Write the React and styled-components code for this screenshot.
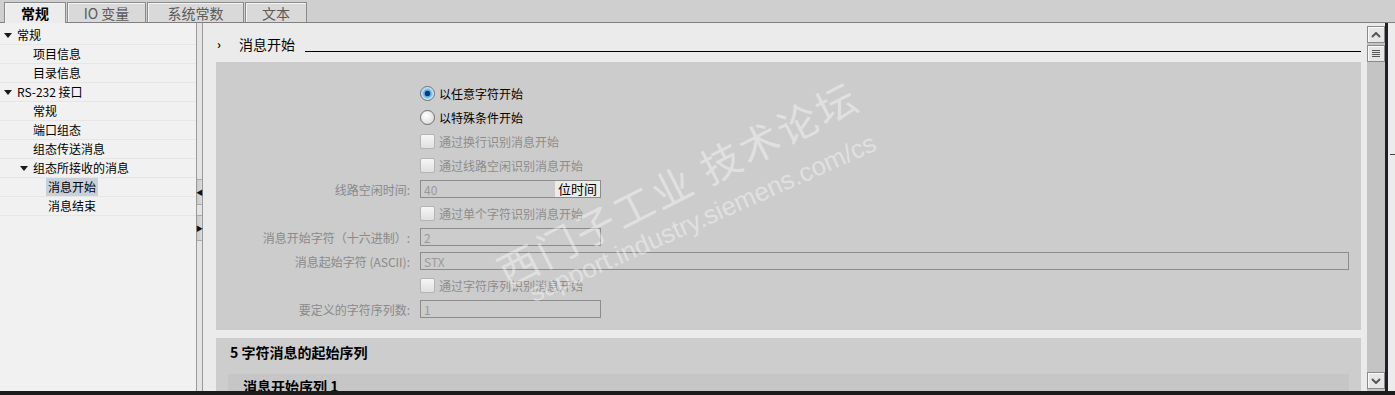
import React from 'react';
import styled, { createGlobalStyle } from 'styled-components';

const GlobalStyle = createGlobalStyle`
	html, body {
		margin: 0;
		padding: 0;
		background: #ebebeb;
		overflow: hidden;
	}
	body {
		font-family: "Noto Sans CJK SC", "Noto Sans", sans-serif;
		font-size: 12px;
	}
`;

// Layout
const Page = styled.div`
	display: flex;
	flex-direction: column;
	width: 1395px;
	height: 395px;
	overflow: hidden;
`;

const TabBar = styled.div`
	display: flex;
	align-items: flex-end;
	height: 23px;
	padding-left: 4px;
	background: #cfcfcf;
	border-bottom: 1px solid #808080;
	box-sizing: border-box;
`;

const Tab = styled.div`
	display: flex;
	align-items: center;
	justify-content: center;
	width: ${(p) => p.w}px;
	height: 21px;
	margin-right: 1px;
	margin-bottom: -1px;
	box-sizing: border-box;
	border: 1px solid #8a8a8a;
	border-bottom: ${(p) => (p.active ? 'none' : '1px solid #808080')};
	background: ${(p) => (p.active ? '#ececec' : '#d9d9d9')};
	font-size: 14px;
	font-weight: ${(p) => (p.active ? 700 : 400)};
	color: ${(p) => (p.active ? '#000' : '#5a5a5a')};
	box-shadow: inset 1px 1px 0 #f4f4f4;
`;

const Body = styled.div`
	display: flex;
	height: 368px;
`;

const Sidebar = styled.div`
	width: 196px;
	background: #f1f1f1;
	padding-top: 3px;
	box-sizing: border-box;
`;

const TreeRow = styled.div`
	display: flex;
	align-items: center;
	height: 19px;
	padding-left: ${(p) => p.indent}px;
	border-bottom: 1px solid #e6e6e6;
	box-sizing: border-box;
	font-size: 12px;
	color: #000;
	white-space: nowrap;
`;

const Caret = styled.span`
	display: inline-block;
	width: 0;
	height: 0;
	margin-right: 3px;
	border-left: 4px solid transparent;
	border-right: 4px solid transparent;
	border-top: 5px solid #1a1a1a;
`;

const TreeLabel = styled.span`
	padding: 0 2px;
	line-height: 18px;
	background: ${(p) => (p.selected ? '#c8d0da' : 'transparent')};
`;

const Splitter = styled.div`
	display: flex;
	flex-direction: column;
	width: 7px;
	box-sizing: border-box;
	border-left: 1px solid #9a9a9a;
	border-right: 1px solid #9a9a9a;
	background: #e4e4e4;
	padding-top: 156px;
	gap: 10px;
`;

const SplitButton = styled.div`
	display: flex;
	align-items: center;
	justify-content: center;
	height: 24px;
	background: linear-gradient(90deg, #c8c8c8, #dcdcdc);
	border-top: 1px solid #aaa;
	border-bottom: 1px solid #aaa;
	font-size: 7px;
	color: #111;
	line-height: 1;
`;

const Main = styled.div`
	position: relative;
	flex: 1;
	padding: 0 6px 0 13px;
	background: #ebebeb;
	overflow: hidden;
`;

const SectionHead = styled.div`
	display: flex;
	align-items: flex-end;
	height: 39px;
	padding-bottom: 9px;
	box-sizing: border-box;
`;

const Chevron = styled.span`
	width: 22px;
	font-size: 12px;
	font-weight: 700;
	line-height: 18px;
	padding-left: 1px;
`;

const HeadTitle = styled.span`
	font-size: 14px;
	line-height: 18px;
	color: #000;
	margin-right: 10px;
`;

const HeadLine = styled.div`
	flex: 1;
	height: 1px;
	margin-bottom: 1px;
	background: #000;
`;

const Panel = styled.div`
	background: #cccccc;
	padding: 19px 0 9px;
`;

const FormRow = styled.div`
	display: grid;
	grid-template-columns: 194px 1fr;
	column-gap: 10px;
	align-items: center;
	height: 24px;
`;

const FieldLabel = styled.div`
	text-align: right;
	color: #8a8a8a;
	font-size: 12px;
	white-space: nowrap;
`;

const Control = styled.div`
	display: flex;
	align-items: center;
	gap: 4px;
	color: ${(p) => (p.dim ? '#8c8c8c' : '#000')};
	font-size: 12px;
`;

const Radio = styled.span`
	width: 15px;
	height: 15px;
	border-radius: 50%;
	box-sizing: border-box;
	border: 1px solid #6e6e6e;
	background: ${(p) => (p.checked
		? 'radial-gradient(circle, #0b3a7a 0 2.5px, #4fa6de 3px, #cfe8f8 6px)'
		: 'radial-gradient(circle at 40% 35%, #ffffff, #d4d4d4)')};
`;

const CheckBox = styled.span`
	width: 15px;
	height: 15px;
	border-radius: 2px;
	box-sizing: border-box;
	border: 1px solid #b4b4b4;
	background: linear-gradient(180deg, #f6f6f6, #e0e0e0);
`;

const TextBox = styled.div`
	display: flex;
	align-items: center;
	justify-content: space-between;
	width: ${(p) => (p.wide ? 'auto' : '181px')};
	margin-right: ${(p) => (p.wide ? '12px' : '0')};
	height: 18px;
	box-sizing: border-box;
	border: 1px solid #8c8c8c;
	padding-left: 3px;
	color: #9a9a9a;
	font-size: 12px;
`;

const UnitButton = styled.span`
	height: 16px;
	line-height: 16px;
	padding: 0 3px;
	background: #ececec;
	color: #000;
	font-size: 13px;
`;

const Panel2 = styled.div`
	margin-top: 8px;
	background: #cdcdcd;
	height: 60px;
`;

const Panel2Title = styled.div`
	padding: 4px 0 0 14px;
	height: 36px;
	box-sizing: border-box;
	font-size: 14px;
	font-weight: 700;
	color: #000;
`;

const SubPanel = styled.div`
	margin: 0 12px;
	height: 30px;
	background: #c6c6c6;
	padding: 2px 0 0 15px;
	box-sizing: border-box;
	font-size: 14px;
	font-weight: 700;
`;

const Watermark = styled.div`
	position: absolute;
	left: ${(p) => p.x}px;
	top: ${(p) => p.y}px;
	transform: rotate(${(p) => p.r}deg);
	transform-origin: left bottom;
	color: rgba(255, 255, 255, 0.42);
	font-size: ${(p) => p.size}px;
	font-family: ${(p) => (p.latin ? '"Liberation Sans", sans-serif' : '"Noto Sans CJK SC", sans-serif')};
	white-space: nowrap;
	pointer-events: none;
	letter-spacing: ${(p) => (p.latin ? '0' : '3px')};
`;

const Scrollbar = styled.div`
	display: flex;
	flex-direction: column;
	width: 18px;
	padding-top: 3px;
	box-sizing: border-box;
	background: linear-gradient(180deg, #ebebeb 0 3px, #c4c4c4 3px);
`;

const ScrollButton = styled.div`
	display: flex;
	align-items: center;
	justify-content: center;
	height: 17px;
	margin-bottom: 2px;
	box-sizing: border-box;
	border: 1px solid #8a8a8a;
	background: #e6e6e6;
	box-shadow: inset 1px 1px 0 #fafafa;
	margin-top: ${(p) => (p.bottom ? 'auto' : '0')};
`;

const DarkEdge = styled.div`
	width: 3px;
	background: #1d1f2b;
`;

const RightStrip = styled.div`
	width: 7px;
	background: #ececec;
	padding-top: 131px;
	box-sizing: border-box;
`;

const StripTick = styled.div`
	width: 5px;
	height: 1px;
	margin-left: 2px;
	background: #444;
`;

const BottomBar = styled.div`
	height: 4px;
	background: #1c1c1c;
`;

const tree = [
	{ label: '常规', indent: 4, caret: true },
	{ label: '项目信息', indent: 31 },
	{ label: '目录信息', indent: 31 },
	{ label: 'RS-232 接口', indent: 4, caret: true },
	{ label: '常规', indent: 31 },
	{ label: '端口组态', indent: 31 },
	{ label: '组态传送消息', indent: 31 },
	{ label: '组态所接收的消息', indent: 20, caret: true },
	{ label: '消息开始', indent: 46, selected: true },
	{ label: '消息结束', indent: 46 },
];

const UpIcon = () => (
	<svg width="10" height="6" viewBox="0 0 10 6">
		<path d="M1 5 L5 1 L9 5" fill="none" stroke="#555" strokeWidth="2" />
	</svg>
);

const DownIcon = () => (
	<svg width="10" height="6" viewBox="0 0 10 6">
		<path d="M1 1 L5 5 L9 1" fill="none" stroke="#555" strokeWidth="2" />
	</svg>
);

const MenuIcon = () => (
	<svg width="8" height="8" viewBox="0 0 8 8">
		<path d="M0 0.5 H8 M0 2.5 H8 M0 4.5 H8 M0 6.5 H8" stroke="#555" strokeWidth="1" />
	</svg>
);

function App() {
	return (
		<Page>
			<GlobalStyle />
			<TabBar>
				<Tab w={62} active>常规</Tab>
				<Tab w={79}>IO 变量</Tab>
				<Tab w={97}>系统常数</Tab>
				<Tab w={62}>文本</Tab>
			</TabBar>
			<Body>
				<Sidebar>
					{tree.map((item, i) => (
						<TreeRow key={i} indent={item.indent}>
							{item.caret && <Caret />}
							<TreeLabel selected={item.selected}>{item.label}</TreeLabel>
						</TreeRow>
					))}
				</Sidebar>
				<Splitter>
					<SplitButton>◀</SplitButton>
					<SplitButton>▶</SplitButton>
				</Splitter>
				<Main>
					<SectionHead>
						<Chevron>›</Chevron>
						<HeadTitle>消息开始</HeadTitle>
						<HeadLine />
					</SectionHead>
					<Panel>
						<FormRow>
							<FieldLabel />
							<Control><Radio checked />以任意字符开始</Control>
						</FormRow>
						<FormRow>
							<FieldLabel />
							<Control><Radio />以特殊条件开始</Control>
						</FormRow>
						<FormRow>
							<FieldLabel />
							<Control dim><CheckBox />通过换行识别消息开始</Control>
						</FormRow>
						<FormRow>
							<FieldLabel />
							<Control dim><CheckBox />通过线路空闲识别消息开始</Control>
						</FormRow>
						<FormRow>
							<FieldLabel>线路空闲时间:</FieldLabel>
							<TextBox>40<UnitButton>位时间</UnitButton></TextBox>
						</FormRow>
						<FormRow>
							<FieldLabel />
							<Control dim><CheckBox />通过单个字符识别消息开始</Control>
						</FormRow>
						<FormRow>
							<FieldLabel>消息开始字符（十六进制）:</FieldLabel>
							<TextBox>2</TextBox>
						</FormRow>
						<FormRow>
							<FieldLabel>消息起始字符 (ASCII):</FieldLabel>
							<TextBox wide>STX</TextBox>
						</FormRow>
						<FormRow>
							<FieldLabel />
							<Control dim><CheckBox />通过字符序列识别消息开始</Control>
						</FormRow>
						<FormRow>
							<FieldLabel>要定义的字符序列数:</FieldLabel>
							<TextBox>1</TextBox>
						</FormRow>
					</Panel>
					<Panel2>
						<Panel2Title>5 字符消息的起始序列</Panel2Title>
						<SubPanel>消息开始序列 1</SubPanel>
					</Panel2>
					<Watermark x={310} y={218} r={-27} size={40}>西门子工业 技术论坛</Watermark>
					<Watermark x={334} y={255} r={-24} size={26} latin>support.industry.siemens.com/cs</Watermark>
				</Main>
				<Scrollbar>
					<ScrollButton><UpIcon /></ScrollButton>
					<ScrollButton><MenuIcon /></ScrollButton>
					<ScrollButton bottom><DownIcon /></ScrollButton>
				</Scrollbar>
				<DarkEdge />
				<RightStrip>
					<StripTick />
				</RightStrip>
			</Body>
			<BottomBar />
		</Page>
	);
}

export default App;
